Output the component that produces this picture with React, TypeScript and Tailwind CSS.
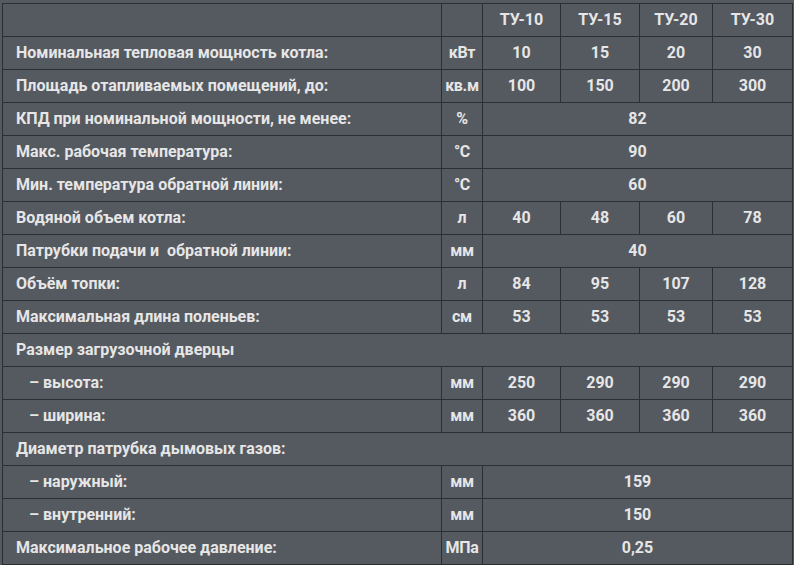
import React from "react";

type Row =
  | { label: string; indent?: boolean; unit: string; vals: string[] }
  | { label: string; indent?: boolean; unit: string; span: string }
  | { label: string; full: true };

const rows: Row[] = [
  { label: "Номинальная тепловая мощность котла:", unit: "кВт", vals: ["10", "15", "20", "30"] },
  { label: "Площадь отапливаемых помещений, до:", unit: "кв.м", vals: ["100", "150", "200", "300"] },
  { label: "КПД при номинальной мощности, не менее:", unit: "%", span: "82" },
  { label: "Макс. рабочая температура:", unit: "°C", span: "90" },
  { label: "Мин. температура обратной линии:", unit: "°C", span: "60" },
  { label: "Водяной объем котла:", unit: "л", vals: ["40", "48", "60", "78"] },
  { label: "Патрубки подачи и\u00a0 обратной линии:", unit: "мм", span: "40" },
  { label: "Объём топки:", unit: "л", vals: ["84", "95", "107", "128"] },
  { label: "Максимальная длина поленьев:", unit: "см", vals: ["53", "53", "53", "53"] },
  { label: "Размер загрузочной дверцы", full: true },
  { label: "– высота:", indent: true, unit: "мм", vals: ["250", "290", "290", "290"] },
  { label: "– ширина:", indent: true, unit: "мм", vals: ["360", "360", "360", "360"] },
  { label: "Диаметр патрубка дымовых газов:", full: true },
  { label: "– наружный:", indent: true, unit: "мм", span: "159" },
  { label: "– внутренний:", indent: true, unit: "мм", span: "150" },
  { label: "Максимальное рабочее давление:", unit: "МПа", span: "0,25" },
];

const td = "border border-[#2b2e33] p-0 h-[33px]";

export default function App() {
  return (
    <div
      className="w-[794px] h-[565px] bg-[#555960] pt-[3px] pl-[2px] text-[#e6e6e6] font-bold text-[16px] overflow-hidden"
      style={{ fontFamily: "Roboto, 'Noto Sans', sans-serif" }}
    >
      <table className="border-collapse table-fixed w-[790px]">
        <colgroup>
          <col className="w-[439px]" />
          <col className="w-[41px]" />
          <col className="w-[78px]" />
          <col className="w-[79px]" />
          <col className="w-[73px]" />
          <col className="w-[80px]" />
        </colgroup>
        <tbody>
          <tr>
            <td className={td}></td>
            <td className={td}></td>
            {["ТУ-10", "ТУ-15", "ТУ-20", "ТУ-30"].map((h) => (
              <td key={h} className={`${td} text-center`}>
                {h}
              </td>
            ))}
          </tr>
          {rows.map((r, i) => (
            <tr key={i}>
              {"full" in r ? (
                <td className={`${td} pl-[13px]`} colSpan={6}>
                  {r.label}
                </td>
              ) : (
                <>
                  <td className={`${td} ${r.indent ? "pl-[26px]" : "pl-[13px]"}`}>{r.label}</td>
                  <td className={`${td} text-center whitespace-nowrap tracking-[-0.3px]`}>{r.unit}</td>
                  {"span" in r ? (
                    <td className={`${td} text-center`} colSpan={4}>
                      {r.span}
                    </td>
                  ) : (
                    r.vals.map((v, j) => (
                      <td key={j} className={`${td} text-center`}>
                        {v}
                      </td>
                    ))
                  )}
                </>
              )}
            </tr>
          ))}
        </tbody>
      </table>
    </div>
  );
}
